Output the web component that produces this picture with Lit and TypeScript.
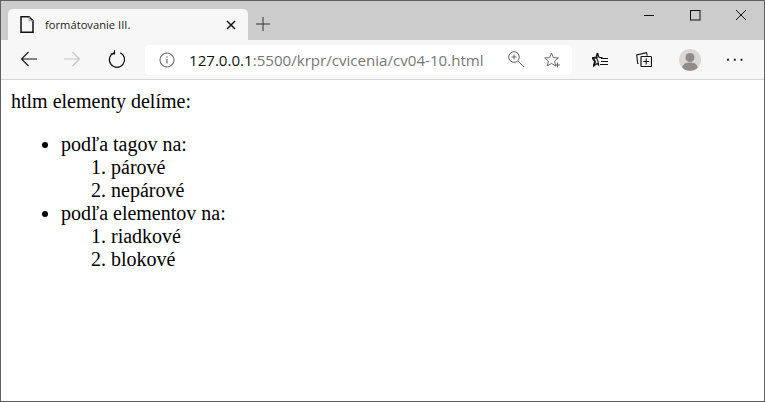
import { LitElement, html, css, svg } from "lit";
import { customElement } from "lit/decorators.js";

const ic = (w: number, h: number, body: unknown) =>
  html`<svg width=${w} height=${h} viewBox="0 0 ${w} ${h}" fill="none" stroke="currentColor" stroke-width="1">${body}</svg>`;

@customElement("app-root")
export class AppRoot extends LitElement {
  static styles = css`
    :host { display: block; width: 765px; height: 402px; overflow: hidden; }
    .win { box-sizing: border-box; width: 765px; height: 402px; border: 1px solid #5f5f5f; display: flex; flex-direction: column; background: #fff; }
    .titlebar { height: 39px; background: #cccccc; display: flex; align-items: flex-end; padding-left: 7px; flex: none; }
    .tab { width: 240px; height: 31px; background: #f7f7f7; border-radius: 5px 5px 0 0; display: flex; align-items: center; box-sizing: border-box; padding-left: 12px; color: #1a1a1a; }
    .tab .title { font: 11.2px "Open Sans", "Liberation Sans", sans-serif; margin-left: 11px; flex: 1; color: #222; }
    .tab .close { display: flex; margin-right: 12px; color: #111; }
    .plus { display: flex; margin: 0 0 9px 8px; color: #333; }
    .spacer { flex: 1; }
    .caps { display: flex; align-self: flex-start; color: #111; }
    .cap { width: 46px; height: 28px; display: flex; align-items: center; justify-content: center; }
    .toolbar { height: 39px; background: #f7f7f7; border-bottom: 1px solid #d6d6d6; display: flex; align-items: center; flex: none; color: #111; }
    .btn { width: 40px; height: 37px; align-self: flex-start; display: flex; justify-content: center; align-items: center; }
    .back { margin-left: 8px; }
    .fwd { color: #c4c4c4; margin-left: 3px; }
    .reload { margin-left: 5px; }
    .url { width: 427px; height: 30px; background: #fff; border-radius: 4px; margin-left: 8px; display: flex; align-items: center; box-sizing: border-box; padding-left: 14px; color: #666; }
    .addr { font: 15.1px "Open Sans", "Liberation Sans", sans-serif; margin-left: 14px; flex: 1; color: #767676; white-space: nowrap; }
    .addr b { font-weight: 400; color: #111; }
    .u { margin-right: 19px; display: flex; }
    .u2 { margin-right: 11px; display: flex; }
    .tools { display: flex; align-items: center; margin-left: 5.5px; }
    .tool { box-sizing: border-box; width: 45px; display: flex; justify-content: center; align-items: center; color: #111; }
    .col { padding-right: 2px; }
    .page { flex: 1; font: 20px/23px "Liberation Serif", "Times New Roman", serif; color: #000; padding: 0 10px; }
    p { margin: 10px 0 20px; }
    ul, ol { margin: 0; padding-left: 50px; }
    ul { list-style: disc; }
    ol { list-style: decimal; }
  `;

  render() {
    return html`<div class="win">
      <div class="titlebar">
        <div class="tab">
          ${ic(14, 17, svg`<path d="M1 .8h8l4 4v11.400H1z" stroke="#111" stroke-width="1.500"/><path d="M9.200 1v3.800H13" stroke="#999" stroke-width="1"/>`)}
          <span class="title">formátovanie III.</span>
          <span class="close">${ic(10, 10, svg`<path d="M1 1l8 8M9 1l-8 8" stroke-width="1.500"/>`)}</span>
        </div>
        <span class="plus">${ic(14, 14, svg`<path d="M7 0v14M0 7h14"/>`)}</span>
        <span class="spacer"></span>
        <div class="caps">
          <span class="cap">${ic(12, 12, svg`<path d="M1 6.500h10"/>`)}</span>
          <span class="cap">${ic(11, 11, svg`<rect x=".5" y=".5" width="9.500" height="9.500"/>`)}</span>
          <span class="cap">${ic(12, 12, svg`<path d="M1 1l10 10M11 1L1 11"/>`)}</span>
        </div>
      </div>
      <div class="toolbar">
        <span class="btn back">${ic(18, 16, svg`<path d="M17 8H1.500M8.500 1L1.500 8l7 7" stroke-width="1.100"/>`)}</span>
        <span class="btn fwd">${ic(18, 16, svg`<path d="M1 8h15.500M9.500 1l7 7-7 7" stroke-width="1.100"/>`)}</span>
        <span class="btn reload">${ic(18, 18, svg`<path d="M5.800 2.800A7.600 7.600 0 1 0 12.200 2.800" stroke-width="1.200"/><path d="M6.500 .3v3.600H2.900" stroke-width="1.200"/>`)}</span>
        <div class="url">
          ${ic(16, 16, svg`<circle cx="8" cy="8" r="7" stroke-width="1.100"/><path d="M8 7v4.500M8 4.200v1.200" stroke-width="1.100"/>`)}
          <span class="addr"><b>127.0.0.1</b>:5500/krpr/cvicenia/cv04-10.html</span>
          <span class="u">${ic(17, 17, svg`<circle cx="6" cy="6" r="5.300"/><path d="M10 10l6 6M3.500 6h5M6 3.500v5"/>`)}</span>
          <span class="u2">${ic(17, 16, svg`<path d="M7.500 1l1.900 4.600 4.900.4-3.700 3.200 1.100 4.800-4.200-2.600-4.200 2.600 1.100-4.800L.7 6l4.900-.4z"/><path d="M11 13h5M13.500 10.500v5"/>`)}</span>
        </div>
        <div class="tools">
          <span class="tool">${ic(16, 16, svg`<path d="M5.500 1l1.500 4.400 3.500.2M6 9.500l.6 3.500L5 11.500 1.800 14 3 9.500.5 6l4-.5z" stroke-width="1.100"/><path d="M1.800 14 3 9.500.5 6l4-.5L5.500 1" stroke-width="1.800"/><path d="M9 6.500h7M9 9.500h7M8 12.500h8"/>`)}</span>
          <span class="tool col">${ic(16, 15, svg`<path d="M2.500 11.500H1.700L.7 3 10.500.6l.7 3" stroke-width="1.100"/><rect x="5" y="4.500" width="10.500" height="10" rx=".8" stroke-width="1.200"/><path d="M10.200 6.500v6M7.200 9.500h6" stroke-width="1.100"/>`)}</span>
          <span class="tool">${ic(22, 22, svg`<circle cx="11" cy="11" r="11" fill="#d9d6d3" stroke="none"/><circle cx="11" cy="8.500" r="4.500" fill="#8e8b88" stroke="none"/><path d="M3.200 18.500c1-3.800 3.800-5 7.800-5s6.800 1.200 7.800 5a11 11 0 0 1-15.600 0z" fill="#8e8b88" stroke="none"/>`)}</span>
          <span class="tool">${ic(16, 4, svg`<path d="M1 .8v2M7.800 .8v2M14.500 .8v2" stroke-width="1.800"/>`)}</span>
        </div>
      </div>
      <div class="page">
        <p>htlm elementy delíme:</p>
        <ul>
          <li>podľa tagov na:
            <ol><li>párové</li><li>nepárové</li></ol>
          </li>
          <li>podľa elementov na:
            <ol><li>riadkové</li><li>blokové</li></ol>
          </li>
        </ul>
      </div>
    </div>`;
  }
}
